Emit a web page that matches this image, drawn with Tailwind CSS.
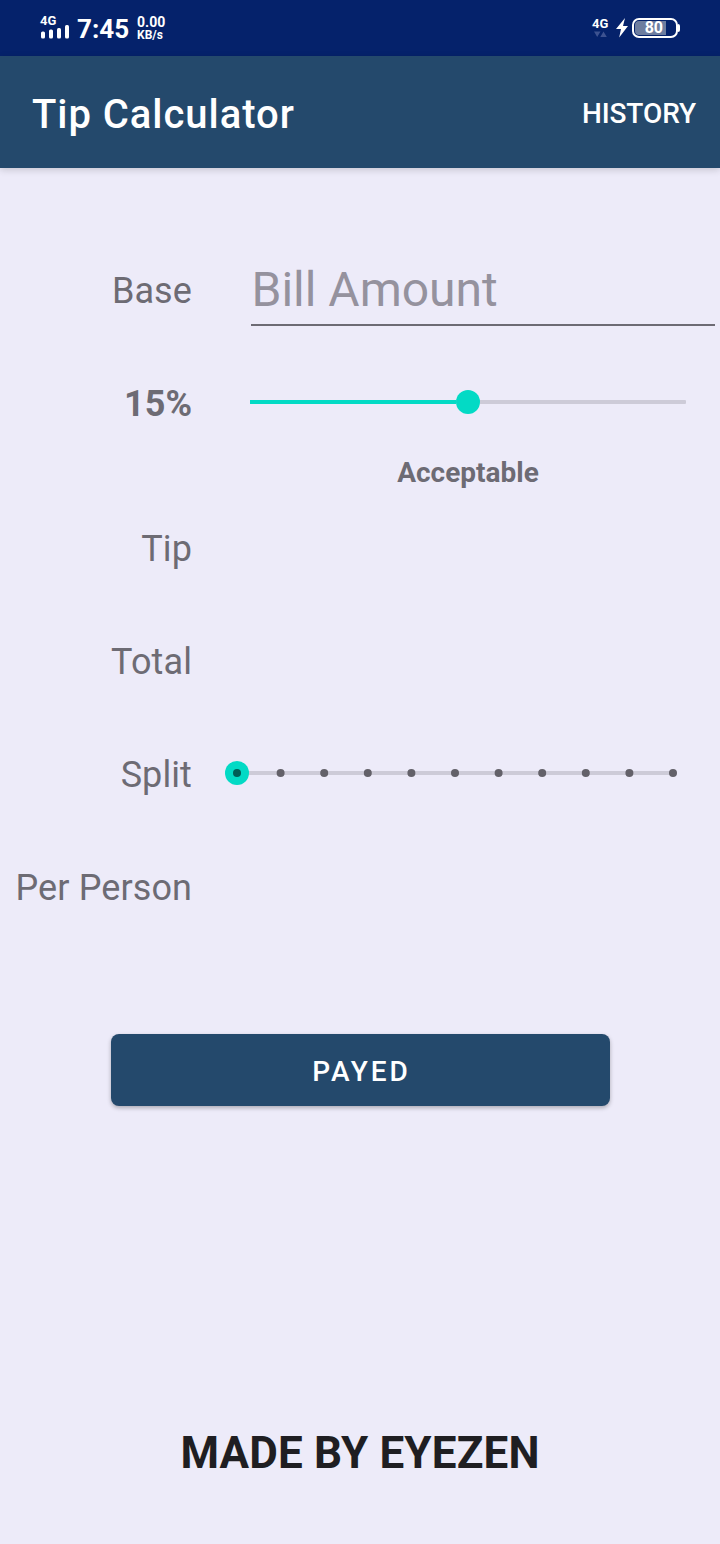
<!DOCTYPE html>
<html lang="en">
<head>
<meta charset="utf-8">
<title>Tip Calculator</title>
<script src="https://cdn.jsdelivr.net/npm/@tailwindcss/browser@4"></script>
</head>
<body class="bg-[#edebf9] font-['Roboto',sans-serif]">
<div class="flex h-[1544px] w-[720px] flex-col overflow-hidden">
  <div class="flex h-14 shrink-0 items-start bg-[#05226b] pl-10 text-white">
    <div class="flex w-[30px] flex-col pt-[15px]">
      <span class="text-[13px] leading-[12px] font-bold">4G</span>
      <svg class="-mt-[2px]" width="30" height="14" viewBox="0 0 30 14" fill="#fff"><rect x="1" y="6.500" width="4" height="7" rx="1.500"/><rect x="9" y="4.500" width="4" height="9" rx="1.500"/><rect x="17" y="3" width="4" height="10.500" rx="1.500"/><rect x="25" y="0" width="4" height="13.500" rx="1.500"/></svg>
    </div>
    <span class="ml-[7px] pt-[14px] text-[26px] leading-[30px] font-bold">7:45</span>
    <div class="ml-2 flex flex-col pt-4 text-[13px] leading-[13px] font-bold">
      <span class="text-[14px]">0.00</span><span class="text-[12px]">KB/s</span>
    </div>
    <div class="ml-auto flex w-[17px] flex-col pt-[17px]">
      <span class="text-[13px] leading-[13px] font-bold">4G</span>
      <svg class="mt-px" width="17" height="7" viewBox="0 0 17 7" fill="#3d5290"><path d="M2 .5h6.500L5.200 6zM8.300 6h6.500L11.500.5z"/></svg>
    </div>
    <svg class="mt-[18px] ml-[6px]" width="14" height="20" viewBox="0 0 14 20" fill="#fff"><path d="M10 0 1 11h5l-1.800 8.500L13 8H8z"/></svg>
    <div class="mt-[18px] ml-[3px] flex h-5 w-[46px] items-center rounded-[7px] border-2 border-white pl-px">
      <div class="flex h-[14px] w-[31px] items-center justify-end rounded-l-[4px] bg-[#6d7d9f] pr-[3px] text-[16px] leading-[16px] font-bold">80</div>
    </div>
    <div class="mt-6 mr-10 h-2 w-[2px] rounded-r bg-white"></div>
  </div>

  <header class="z-10 flex h-28 shrink-0 items-center justify-between bg-[#24496c] pr-6 pl-8 text-white shadow-[0_2px_7px_rgba(0,0,0,0.16)]">
    <h1 class="pt-[6px] text-[40px] leading-[48px] font-medium tracking-[0.95px]">Tip Calculator</h1>
    <button class="pt-[3px] text-[28px] leading-8 font-medium tracking-[-0.1px]">HISTORY</button>
  </header>

  <main class="flex flex-col pt-[66px] text-[36px] leading-[40px] text-[#6d6b74]">
    <div class="flex h-[113px] items-center">
      <label class="w-48 pt-px text-right tracking-[0.1px]">Base</label>
      <div class="mt-[18px] ml-[59px] h-[74px] w-[464px] self-start border-b-2 border-[#6d6b74] pt-[10px] pl-[0.5px] text-[48px] leading-[56px] text-[#95929e]">Bill Amount</div>
    </div>
    <div class="flex h-[113px] items-center">
      <span class="w-48 pt-px text-right font-bold">15%</span>
      <div class="-mt-[3px] ml-[58px] flex h-6 w-[436px] items-center">
        <div class="h-1 w-[206px] bg-[#03dac5]"></div>
        <div class="size-6 rounded-full bg-[#03dac5]"></div>
        <div class="h-1 w-[206px] rounded-r-[1px] bg-[#cdcbd8]"></div>
      </div>
    </div>
    <div class="mb-[7px] ml-[250px] w-[436px] text-center text-[28px] leading-[25px] font-bold">Acceptable</div>
    <div class="flex h-[113px] items-center"><span class="w-48 pt-px text-right tracking-[0.1px]">Tip</span></div>
    <div class="flex h-[113px] items-center"><span class="w-48 pt-px text-right tracking-[0.1px]">Total</span></div>
    <div class="flex h-[113px] items-center">
      <span class="w-48 pt-px text-right tracking-[0.1px]">Split</span>
      <svg class="-mt-[3px] ml-8" width="460" height="26" viewBox="0 0 460 26">
        <path d="M13 13H449" stroke="#cdcbd8" stroke-width="4"/>
        <circle cx="13" cy="13" r="12" fill="#03dac5"/>
        <circle cx="13" cy="13" r="4" fill="#015d56"/>
        <g fill="#636169"><circle cx="56.600" cy="13" r="4"/><circle cx="100.200" cy="13" r="4"/><circle cx="143.800" cy="13" r="4"/><circle cx="187.400" cy="13" r="4"/><circle cx="231" cy="13" r="4"/><circle cx="274.600" cy="13" r="4"/><circle cx="318.200" cy="13" r="4"/><circle cx="361.800" cy="13" r="4"/><circle cx="405.400" cy="13" r="4"/><circle cx="449" cy="13" r="4"/></g>
      </svg>
    </div>
    <div class="flex h-[113px] items-center"><span class="w-48 pt-px text-right tracking-[0.1px] whitespace-nowrap">Per Person</span></div>
  </main>

  <button class="mt-[90px] ml-[111px] h-[72px] w-[499px] shrink-0 rounded-lg bg-[#24496c] pt-[3px] pl-[2px] text-[28px] leading-8 font-medium tracking-[2.9px] text-white shadow-[0_2px_4px_rgba(0,0,0,0.28)]">PAYED</button>
  <footer class="mt-[321px] text-center text-[44px] leading-[52px] font-bold tracking-[0.15px] text-[#1f1e22]">MADE BY EYEZEN</footer>
</div>
</body>
</html>
